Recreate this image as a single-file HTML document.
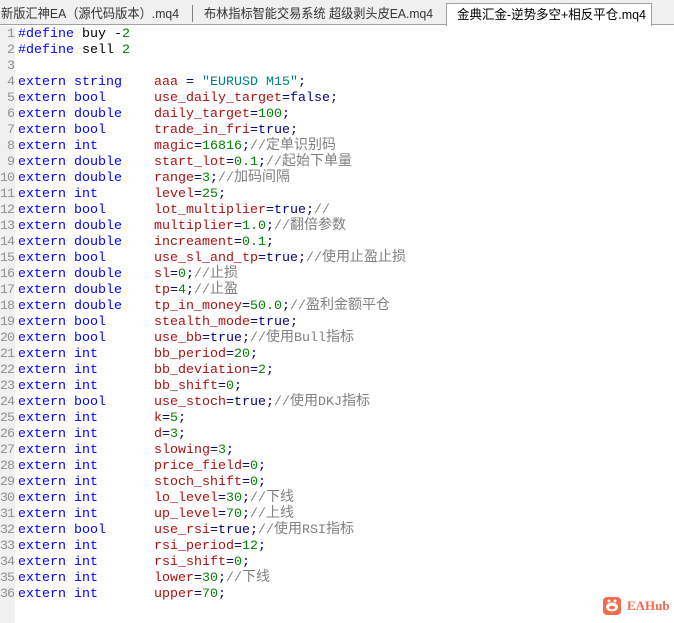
<!DOCTYPE html>
<html><head><meta charset="utf-8"><style>
body{margin:0;width:674px;height:623px;background:#fff;overflow:hidden;position:relative;font-family:"Liberation Sans","Noto Sans CJK SC",sans-serif}
.tabs{position:absolute;left:0;top:0;width:674px;height:25px;background:#f0f0f0;border-bottom:1px solid #a0a0a0;box-sizing:border-box}
.sep{position:absolute;top:5px;width:1px;height:17px;background:#808080}
.act{position:absolute;left:446px;top:3px;width:206px;height:23px;background:#fff;border:1px solid #a0a0a0;border-bottom:none;box-sizing:border-box}
svg.t{position:absolute;left:0;top:0}
.gut{position:absolute;left:0;top:26px;width:15px;height:597px;background:#f0f0f0}
.code{position:absolute;left:0;top:27px;font-family:"Liberation Mono","Noto Sans CJK SC",monospace;font-size:13.33px;line-height:16px;white-space:pre}
.ln{display:inline-block;width:14px;text-align:right;color:#909090;margin-right:4px;letter-spacing:-1px}
.k{color:#0000ff}.v{color:#b01010}.n{color:#008000}.o{color:#000080}.s{color:#008080}
.c{color:#808080}
.z{font-family:"Noto Sans CJK SC",sans-serif;font-size:14px;line-height:1px}
.logo{position:absolute;left:603px;top:597px;width:18px;height:18px;background:#f26b4a;border-radius:4px}
.lt{position:absolute;left:627px;top:597px;font:bold 13px "Liberation Serif",serif;color:#f26b4a;line-height:18px}
</style></head><body>
<div class="tabs">
<div class="sep" style="left:192px"></div>
<div class="act"></div>
<svg class="t" width="674" height="25" font-family="Liberation Sans, Noto Sans CJK SC, sans-serif" font-size="13">
<text x="1" y="18" fill="#333" textLength="178" lengthAdjust="spacingAndGlyphs">新版汇神EA（源代码版本）.mq4</text>
<text x="204" y="18" fill="#333" textLength="229" lengthAdjust="spacingAndGlyphs">布林指标智能交易系统 超级剥头皮EA.mq4</text>
<text x="457" y="19" fill="#000" textLength="189" lengthAdjust="spacingAndGlyphs">金典汇金-逆势多空+相反平仓.mq4</text>
</svg>
</div>
<div class="gut"></div>
<div class="code"><span class="ln">1</span><span class="k">#define</span> buy <span class="o">-</span><span class="n">2</span>
<span class="ln">2</span><span class="k">#define</span> sell <span class="n">2</span>
<span class="ln">3</span>
<span class="ln">4</span><span class="k">extern string</span>    <span class="v">aaa</span> <span class="o">=</span> <span class="s">"EURUSD M15"</span><span class="o">;</span>
<span class="ln">5</span><span class="k">extern bool</span>      <span class="v">use_daily_target</span><span class="o">=false;</span>
<span class="ln">6</span><span class="k">extern double</span>    <span class="v">daily_target</span><span class="o">=</span><span class="n">100</span><span class="o">;</span>
<span class="ln">7</span><span class="k">extern bool</span>      <span class="v">trade_in_fri</span><span class="o">=true;</span>
<span class="ln">8</span><span class="k">extern int</span>       <span class="v">magic</span><span class="o">=</span><span class="n">16816</span><span class="o">;</span><span class="c">//<span class="z">定单识别码</span></span>
<span class="ln">9</span><span class="k">extern double</span>    <span class="v">start_lot</span><span class="o">=</span><span class="n">0.1</span><span class="o">;</span><span class="c">//<span class="z">起始下单量</span></span>
<span class="ln">10</span><span class="k">extern double</span>    <span class="v">range</span><span class="o">=</span><span class="n">3</span><span class="o">;</span><span class="c">//<span class="z">加码间隔</span></span>
<span class="ln">11</span><span class="k">extern int</span>       <span class="v">level</span><span class="o">=</span><span class="n">25</span><span class="o">;</span>
<span class="ln">12</span><span class="k">extern bool</span>      <span class="v">lot_multiplier</span><span class="o">=true;</span><span class="c">//</span>
<span class="ln">13</span><span class="k">extern double</span>    <span class="v">multiplier</span><span class="o">=</span><span class="n">1.0</span><span class="o">;</span><span class="c">//<span class="z">翻倍参数</span></span>
<span class="ln">14</span><span class="k">extern double</span>    <span class="v">increament</span><span class="o">=</span><span class="n">0.1</span><span class="o">;</span>
<span class="ln">15</span><span class="k">extern bool</span>      <span class="v">use_sl_and_tp</span><span class="o">=true;</span><span class="c">//<span class="z">使用止盈止损</span></span>
<span class="ln">16</span><span class="k">extern double</span>    <span class="v">sl</span><span class="o">=</span><span class="n">0</span><span class="o">;</span><span class="c">//<span class="z">止损</span></span>
<span class="ln">17</span><span class="k">extern double</span>    <span class="v">tp</span><span class="o">=</span><span class="n">4</span><span class="o">;</span><span class="c">//<span class="z">止盈</span></span>
<span class="ln">18</span><span class="k">extern double</span>    <span class="v">tp_in_money</span><span class="o">=</span><span class="n">50.0</span><span class="o">;</span><span class="c">//<span class="z">盈利金额平仓</span></span>
<span class="ln">19</span><span class="k">extern bool</span>      <span class="v">stealth_mode</span><span class="o">=true;</span>
<span class="ln">20</span><span class="k">extern bool</span>      <span class="v">use_bb</span><span class="o">=true;</span><span class="c">//<span class="z">使用</span>Bull<span class="z">指标</span></span>
<span class="ln">21</span><span class="k">extern int</span>       <span class="v">bb_period</span><span class="o">=</span><span class="n">20</span><span class="o">;</span>
<span class="ln">22</span><span class="k">extern int</span>       <span class="v">bb_deviation</span><span class="o">=</span><span class="n">2</span><span class="o">;</span>
<span class="ln">23</span><span class="k">extern int</span>       <span class="v">bb_shift</span><span class="o">=</span><span class="n">0</span><span class="o">;</span>
<span class="ln">24</span><span class="k">extern bool</span>      <span class="v">use_stoch</span><span class="o">=true;</span><span class="c">//<span class="z">使用</span>DKJ<span class="z">指标</span></span>
<span class="ln">25</span><span class="k">extern int</span>       <span class="v">k</span><span class="o">=</span><span class="n">5</span><span class="o">;</span>
<span class="ln">26</span><span class="k">extern int</span>       <span class="v">d</span><span class="o">=</span><span class="n">3</span><span class="o">;</span>
<span class="ln">27</span><span class="k">extern int</span>       <span class="v">slowing</span><span class="o">=</span><span class="n">3</span><span class="o">;</span>
<span class="ln">28</span><span class="k">extern int</span>       <span class="v">price_field</span><span class="o">=</span><span class="n">0</span><span class="o">;</span>
<span class="ln">29</span><span class="k">extern int</span>       <span class="v">stoch_shift</span><span class="o">=</span><span class="n">0</span><span class="o">;</span>
<span class="ln">30</span><span class="k">extern int</span>       <span class="v">lo_level</span><span class="o">=</span><span class="n">30</span><span class="o">;</span><span class="c">//<span class="z">下线</span></span>
<span class="ln">31</span><span class="k">extern int</span>       <span class="v">up_level</span><span class="o">=</span><span class="n">70</span><span class="o">;</span><span class="c">//<span class="z">上线</span></span>
<span class="ln">32</span><span class="k">extern bool</span>      <span class="v">use_rsi</span><span class="o">=true;</span><span class="c">//<span class="z">使用</span>RSI<span class="z">指标</span></span>
<span class="ln">33</span><span class="k">extern int</span>       <span class="v">rsi_period</span><span class="o">=</span><span class="n">12</span><span class="o">;</span>
<span class="ln">34</span><span class="k">extern int</span>       <span class="v">rsi_shift</span><span class="o">=</span><span class="n">0</span><span class="o">;</span>
<span class="ln">35</span><span class="k">extern int</span>       <span class="v">lower</span><span class="o">=</span><span class="n">30</span><span class="o">;</span><span class="c">//<span class="z">下线</span></span>
<span class="ln">36</span><span class="k">extern int</span>       <span class="v">upper</span><span class="o">=</span><span class="n">70</span><span class="o">;</span></div>
<div class="logo"><svg width="18" height="18" viewBox="0 0 18 18"><circle cx="6" cy="4" r="1.5" fill="#fff"/><circle cx="12" cy="4" r="1.5" fill="#fff"/><ellipse cx="9" cy="10" rx="6" ry="4.5" fill="#fff"/><ellipse cx="9" cy="10.5" rx="3" ry="1.8" fill="#f26b4a"/></svg></div>
<div class="lt">EAHub</div>
</body></html>
